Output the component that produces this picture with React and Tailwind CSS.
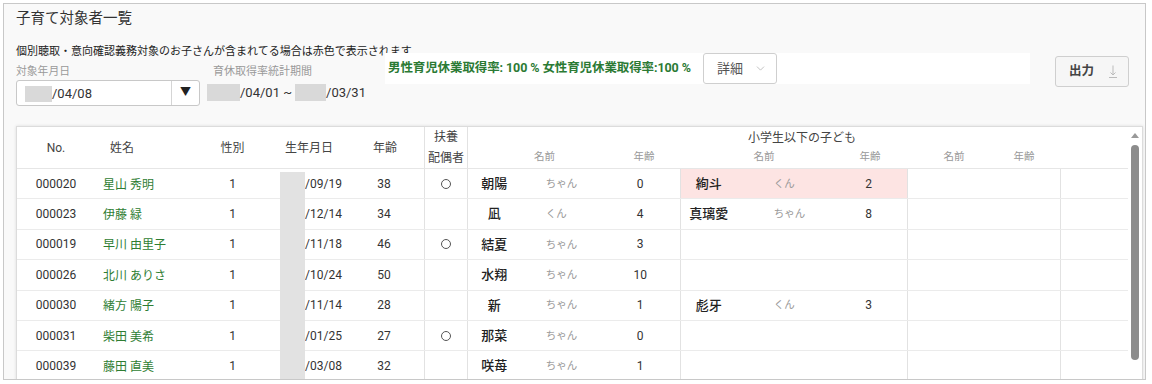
import React from "react";
import { ChevronDown } from "lucide-react";

const rows = [
  { no: "000020", name: "星山 秀明", date: "/09/19", age: 38, spouse: true, c1: ["朝陽", "ちゃん", 0], c2: ["絢斗", "くん", 2], pink: true },
  { no: "000023", name: "伊藤 緑", date: "/12/14", age: 34, spouse: false, c1: ["凪", "くん", 4], c2: ["真璃愛", "ちゃん", 8] },
  { no: "000019", name: "早川 由里子", date: "/11/18", age: 46, spouse: true, c1: ["結夏", "ちゃん", 3] },
  { no: "000026", name: "北川 ありさ", date: "/10/24", age: 50, spouse: false, c1: ["水翔", "ちゃん", 10] },
  { no: "000030", name: "緒方 陽子", date: "/11/14", age: 28, spouse: false, c1: ["新", "ちゃん", 1], c2: ["彪牙", "くん", 3] },
  { no: "000031", name: "柴田 美希", date: "/01/25", age: 27, spouse: true, c1: ["那菜", "ちゃん", 0] },
  { no: "000039", name: "藤田 直美", date: "/03/08", age: 32, spouse: false, c1: ["咲苺", "ちゃん", 1] },
];

function Row({ r }) {
  return (
    <div className="flex h-[30.4px] border-b border-[#ebebeb] text-[12px] text-[#333]">
      <div className="w-[78px] flex items-center justify-center">{r.no}</div>
      <div className="w-[105px] flex items-center pl-[8px] text-[#2e7d32] pt-[2px]">{r.name}</div>
      <div className="w-[65px] flex items-center justify-center">1</div>
      <div className="w-[83px] flex items-center pl-[40px]">{r.date}</div>
      <div className="w-[76px] flex items-center justify-center pr-[4px]">{r.age}</div>
      <div className="w-[43px] flex items-center justify-center border-l border-[#e2e2e2]">
        {r.spouse ? <span className="w-[10px] h-[10px] rounded-full border border-[#555]"></span> : null}
      </div>
      <div className="w-[213px] flex border-l border-[#e2e2e2]">
        <div className="w-[53px] flex items-center justify-center text-[13px] font-medium text-[#222]">{r.c1 ? r.c1[0] : ""}</div>
        <div className="w-[80px] flex items-center pl-[25px] text-[10.5px] text-[#9a9a9a]">{r.c1 ? r.c1[1] : ""}</div>
        <div className="w-[80px] flex items-center justify-center">{r.c1 ? r.c1[2] : ""}</div>
      </div>
      <div className={"w-[227px] flex border-l border-[#e2e2e2] " + (r.pink ? "bg-[#fde4e3]" : "")}>
        <div className="w-[56px] flex items-center justify-center text-[13px] font-medium text-[#222]">{r.c2 ? r.c2[0] : ""}</div>
        <div className="w-[94px] flex items-center pl-[37px] text-[10.5px] text-[#9a9a9a]">{r.c2 ? r.c2[1] : ""}</div>
        <div className="w-[77px] flex items-center justify-center">{r.c2 ? r.c2[2] : ""}</div>
      </div>
      <div className="w-[153px] border-l border-[#e2e2e2]"></div>
      <div className="w-[68px] border-l border-[#e2e2e2]"></div>
    </div>
  );
}

export default function App() {
  return (
    <div className="w-[1152px] h-[384px] bg-white pt-[3px] pl-[3px] font-[Roboto,'Noto_Sans_CJK_JP',sans-serif]">
      <div className="w-[1143px] h-[377px] border border-[#c8c8c8] bg-[#f9f9f9] overflow-hidden pl-[12px] pr-[2px]">
        <div className="pt-[5px] text-[14.5px] leading-[20px] text-[#333]">子育て対象者一覧</div>
        <div className="mt-[16px] text-[11px] leading-[14px] text-[#222] whitespace-nowrap">
          個別聴取・意向確認義務対象のお子さんが含まれてる場合は赤色で表示されます
        </div>
        <div className="-mt-[6px] flex items-start relative">
          <div className="w-[184px] pt-[12px]">
            <div className="text-[10.8px] leading-[14px] text-[#999]">対象年月日</div>
            <div className="mt-[1px] h-[26px] bg-white border border-[#c8c8c8] rounded-[3px] flex items-center">
              <div className="flex-1 flex items-center pl-[8px] pt-[1px]">
                <span className="w-[27px] h-[16px] bg-[#d9d9d9]"></span>
                <span className="text-[13px] text-[#333]">/04/08</span>
              </div>
              <div className="w-[28px] h-full border-l border-[#d5d5d5] flex items-center justify-center text-[11px] text-[#222]">
                ▼
              </div>
            </div>
          </div>
          <div className="ml-[7px] w-[170px] pt-[12px]">
            <div className="pl-[6px] text-[11px] leading-[14px] text-[#999]">育休取得率統計期間</div>
            <div className="mt-[5px] flex items-center h-[17px] text-[13px] text-[#333] whitespace-nowrap">
              <span className="w-[33px] h-[17px] bg-[#d9d9d9]"></span>
              <span>/04/01 ~</span>
              <span className="ml-[3px] w-[31px] h-[17px] bg-[#d9d9d9]"></span>
              <span>/03/31</span>
            </div>
          </div>
          <div className="ml-[8px] w-[645px] h-[31px] bg-white flex items-center pl-[3px]">
            <div className="w-[315px] text-[12.5px] font-bold text-[#2b7a34] whitespace-nowrap tracking-[-0.1px]">
              男性育児休業取得率: 100 % 女性育児休業取得率:100 %
            </div>
            <div className="w-[74px] h-[31px] border border-[#cfcfcf] rounded-[3px] bg-white flex items-center pl-[13px] text-[13px] text-[#555]">
              <span>詳細</span>
              <ChevronDown size={13} strokeWidth={1.3} color="#aaa" className="ml-[11px]" />
            </div>
          </div>
          <div className="ml-auto mr-[14px] mt-[3px] w-[74px] h-[31px] border border-[#cfcfcf] rounded-[3px] bg-[#f6f6f6] flex items-center pl-[13px]">
            <span className="text-[12.5px] font-bold text-[#444]">出力</span>
            <svg width="10" height="15" viewBox="0 0 10 15" className="ml-[14px]" fill="none" stroke="#bbb" strokeWidth="1">
              <path d="M5 1.5 V11" />
              <path d="M2.5 8.5 L5 11 L7.5 8.5" />
              <path d="M1 13.5 H9" />
            </svg>
          </div>
        </div>

        <div className="mt-[20px] w-[1127px] h-[300px] border border-[#dcdcdc] bg-white shadow-[0_0_3px_rgba(0,0,0,0.12)] flex">
          <div className="w-[1111px]">
            <div className="flex h-[42px] border-b border-[#e6e6e6] text-[12px] text-[#444]">
              <div className="w-[78px] flex items-center justify-center">No.</div>
              <div className="w-[105px] flex items-center pl-[15px]">姓名</div>
              <div className="w-[65px] flex items-center justify-center">性別</div>
              <div className="w-[83px] flex items-center pl-[20px]">生年月日</div>
              <div className="w-[76px] flex items-center justify-center pr-[2px]">年齢</div>
              <div className="w-[43px] flex flex-col items-center justify-center leading-[21px] border-l border-[#e2e2e2]">
                <span>扶養</span>
                <span>配偶者</span>
              </div>
              <div className="w-[661px] border-l border-[#e2e2e2] flex flex-col">
                <div className="pt-[3px] h-[22px] text-center pl-[8px] leading-[16px]">小学生以下の子ども</div>
                <div className="flex text-[10.5px] text-[#999] leading-[16px]">
                  <div className="w-[153px] text-center">名前</div>
                  <div className="w-[46px] text-center">年齢</div>
                  <div className="w-[14px]"></div>
                  <div className="w-[166px] text-center">名前</div>
                  <div className="w-[46px] text-center">年齢</div>
                  <div className="w-[15px]"></div>
                  <div className="w-[92px] text-center">名前</div>
                  <div className="w-[48px] text-center">年齢</div>
                </div>
              </div>
            </div>
            <div className="relative">
              {rows.map((r) => (
                <Row key={r.no} r={r} />
              ))}
              <div className="absolute left-[263px] top-[3px] bottom-0 w-[25px] bg-[#e2e2e2]"></div>
            </div>
          </div>
          <div className="w-[14px] flex flex-col items-center pt-[6px]">
            <div className="w-0 h-0 border-l-[4px] border-r-[4px] border-b-[5px] border-l-transparent border-r-transparent border-b-[#999]"></div>
            <div className="mt-[7px] w-[8px] h-[215px] rounded-full bg-[#8c8c8c]"></div>
          </div>
        </div>
      </div>
    </div>
  );
}
